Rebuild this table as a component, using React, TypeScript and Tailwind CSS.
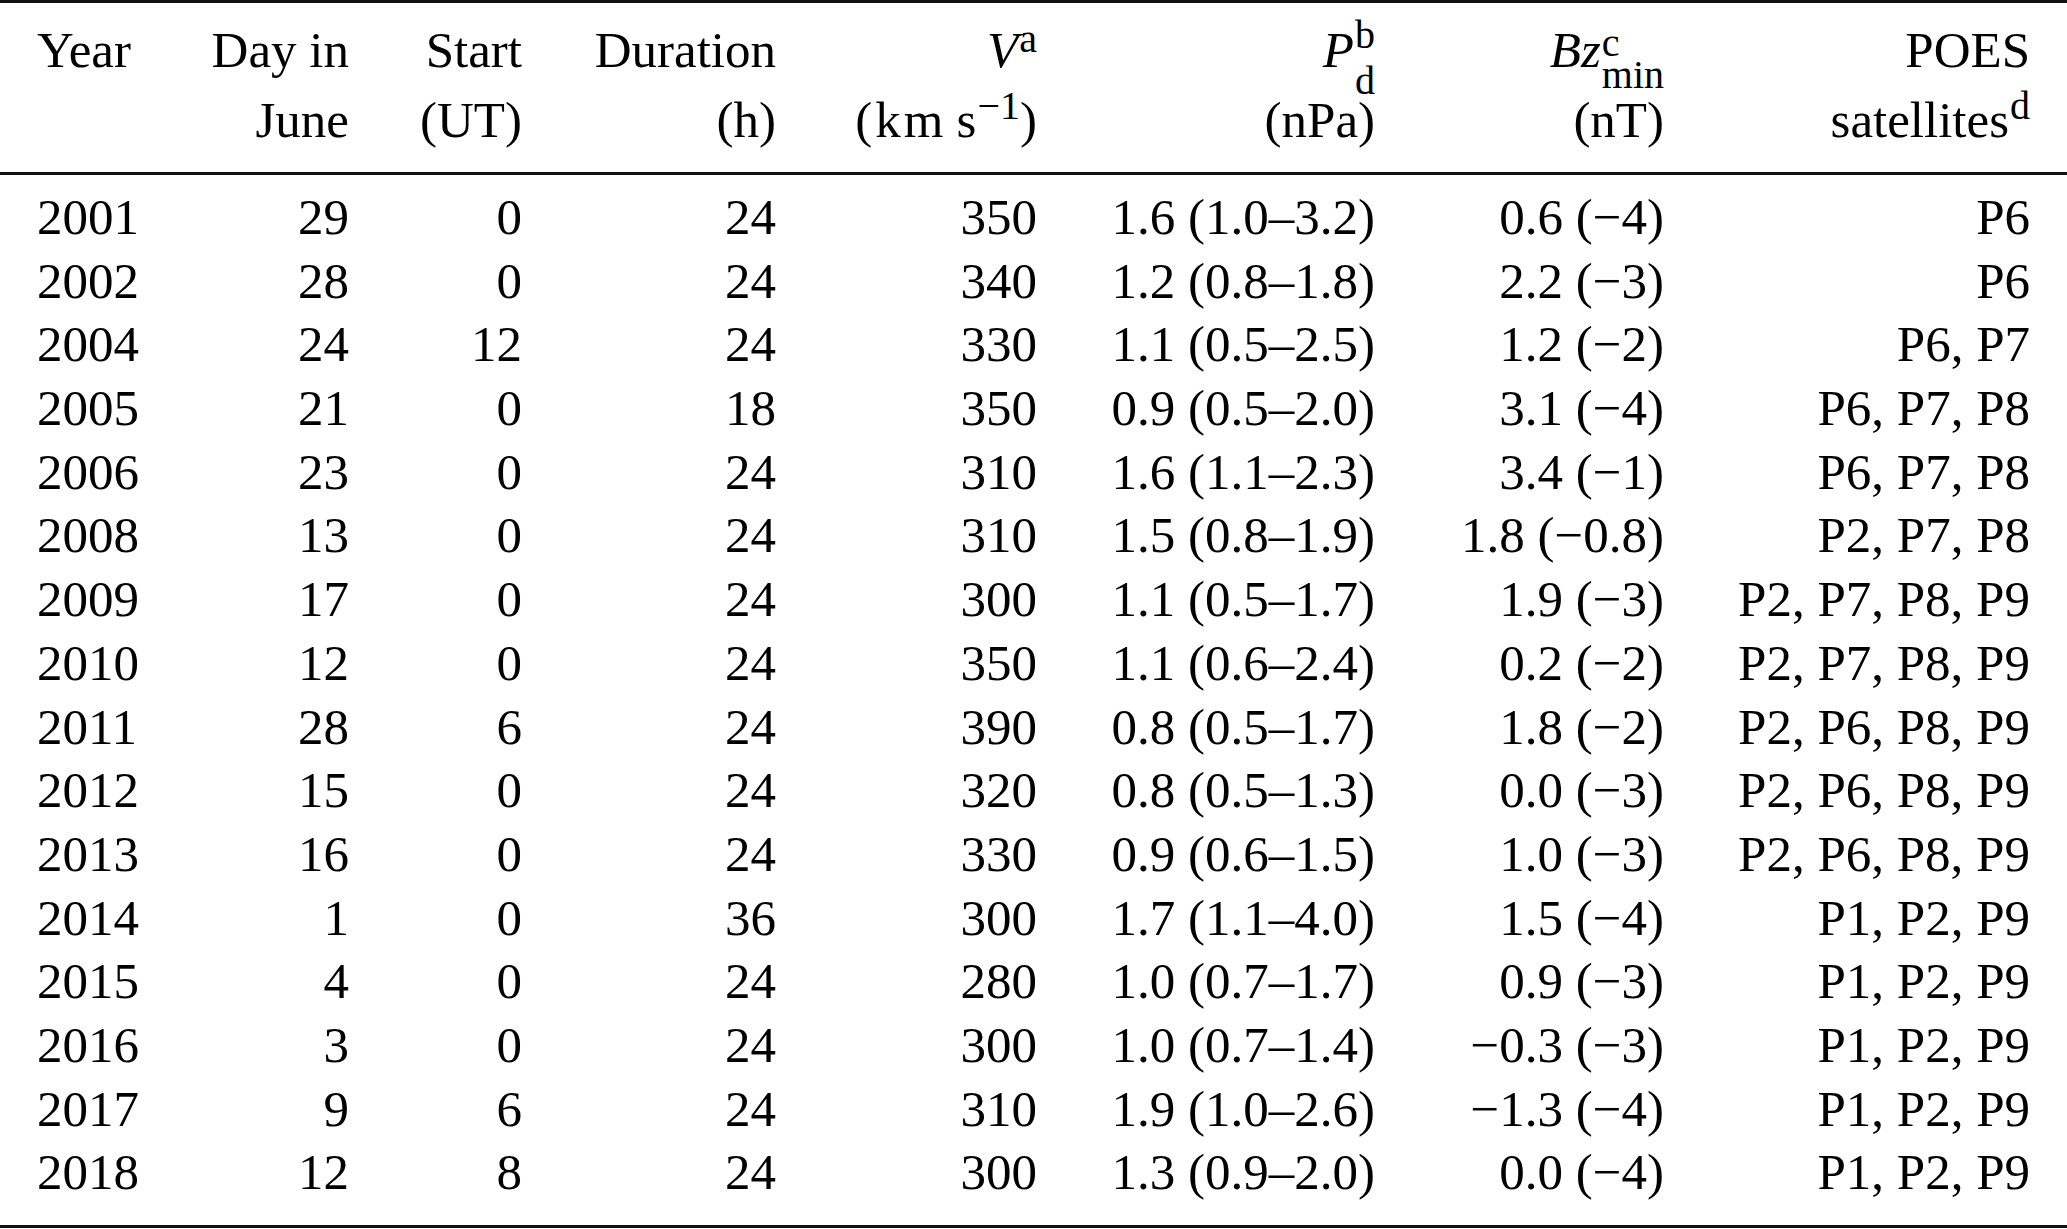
import React from 'react';

const cols = 'grid grid-cols-[200px_112px_173px_254px_261px_338px_289px_366px] pl-[37px] pr-[37px]';

const rows: string[][] = [
  ['2001', '29', '0', '24', '350', '1.6 (1.0–3.2)', '0.6 (−4)', 'P6'],
  ['2002', '28', '0', '24', '340', '1.2 (0.8–1.8)', '2.2 (−3)', 'P6'],
  ['2004', '24', '12', '24', '330', '1.1 (0.5–2.5)', '1.2 (−2)', 'P6, P7'],
  ['2005', '21', '0', '18', '350', '0.9 (0.5–2.0)', '3.1 (−4)', 'P6, P7, P8'],
  ['2006', '23', '0', '24', '310', '1.6 (1.1–2.3)', '3.4 (−1)', 'P6, P7, P8'],
  ['2008', '13', '0', '24', '310', '1.5 (0.8–1.9)', '1.8 (−0.8)', 'P2, P7, P8'],
  ['2009', '17', '0', '24', '300', '1.1 (0.5–1.7)', '1.9 (−3)', 'P2, P7, P8, P9'],
  ['2010', '12', '0', '24', '350', '1.1 (0.6–2.4)', '0.2 (−2)', 'P2, P7, P8, P9'],
  ['2011', '28', '6', '24', '390', '0.8 (0.5–1.7)', '1.8 (−2)', 'P2, P6, P8, P9'],
  ['2012', '15', '0', '24', '320', '0.8 (0.5–1.3)', '0.0 (−3)', 'P2, P6, P8, P9'],
  ['2013', '16', '0', '24', '330', '0.9 (0.6–1.5)', '1.0 (−3)', 'P2, P6, P8, P9'],
  ['2014', '1', '0', '36', '300', '1.7 (1.1–4.0)', '1.5 (−4)', 'P1, P2, P9'],
  ['2015', '4', '0', '24', '280', '1.0 (0.7–1.7)', '0.9 (−3)', 'P1, P2, P9'],
  ['2016', '3', '0', '24', '300', '1.0 (0.7–1.4)', '−0.3 (−3)', 'P1, P2, P9'],
  ['2017', '9', '6', '24', '310', '1.9 (1.0–2.6)', '−1.3 (−4)', 'P1, P2, P9'],
  ['2018', '12', '8', '24', '300', '1.3 (0.9–2.0)', '0.0 (−4)', 'P1, P2, P9'],
];

// plain superscript, shifted with position: relative like preflight's <sup>
function Sup({ children, up = 'top-[-18px]' }: { children: React.ReactNode; up?: string }) {
  return <span className={`relative ${up} text-[40px] leading-none ml-[1px]`}>{children}</span>;
}

// sup over sub, both in one grid cell then nudged apart
function Stack({ top, bottom, up, down }: { top: string; bottom: string; up: string; down: string }) {
  return (
    <span className="inline-grid text-[40px] leading-none ml-[1px]">
      <span className={`col-start-1 row-start-1 relative ${up}`}>{top}</span>
      <span className={`col-start-1 row-start-1 relative ${down}`}>{bottom}</span>
    </span>
  );
}

function HeadCell({ l1, l2, left }: { l1: React.ReactNode; l2: React.ReactNode; left?: boolean }) {
  return (
    <div className={`flex flex-col ${left ? 'items-start' : 'items-end'}`}>
      <div className="h-[70px] leading-[70px] whitespace-nowrap">{l1}</div>
      <div className="h-[70px] leading-[70px] whitespace-nowrap">{l2}</div>
    </div>
  );
}

export default function App() {
  return (
    <div
      className="w-[2067px] h-[1229px] bg-white text-black text-[51px] overflow-hidden"
      style={{ fontFamily: '"Liberation Serif", "Times New Roman", serif' }}
    >
      <div className="h-[3px] bg-[#111]" />

      {/* Header */}
      <div className={`${cols} pt-[12px] pb-[17px]`}>
        <HeadCell left l1="Year" l2="" />
        <HeadCell l1="Day in" l2="June" />
        <HeadCell l1="Start" l2="(UT)" />
        <HeadCell l1="Duration" l2="(h)" />
        <HeadCell
          l1={<><i>V</i><Sup up="top-[-15px]">a</Sup></>}
          l2={<><span className="tracking-[3px]">(km</span>{'\u2009'}s<Sup>−1</Sup>)</>}
        />
        <HeadCell
          l1={<><i>P</i><Stack top="b" bottom="d" up="top-[-19px]" down="top-[27px]" /></>}
          l2="(nPa)"
        />
        <HeadCell
          l1={<><i>Bz</i><Stack top="c" bottom="min" up="top-[-11px]" down="top-[21px]" /></>}
          l2="(nT)"
        />
        <HeadCell l1="POES" l2={<>satellites<Sup>d</Sup></>} />
      </div>

      <div className="h-[3px] bg-[#111]" />

      {/* Body */}
      <div className="pt-[11px] pb-[20px]">
        {rows.map((r) => (
          <div key={r[0]} className={`${cols} h-[63.7px] leading-[63.7px] whitespace-nowrap`}>
            {r.map((c, i) => (
              <div key={i} className={i === 0 ? 'text-left' : 'text-right'}>
                {c}
              </div>
            ))}
          </div>
        ))}
      </div>

      <div className="h-[3px] bg-[#111]" />
    </div>
  );
}
